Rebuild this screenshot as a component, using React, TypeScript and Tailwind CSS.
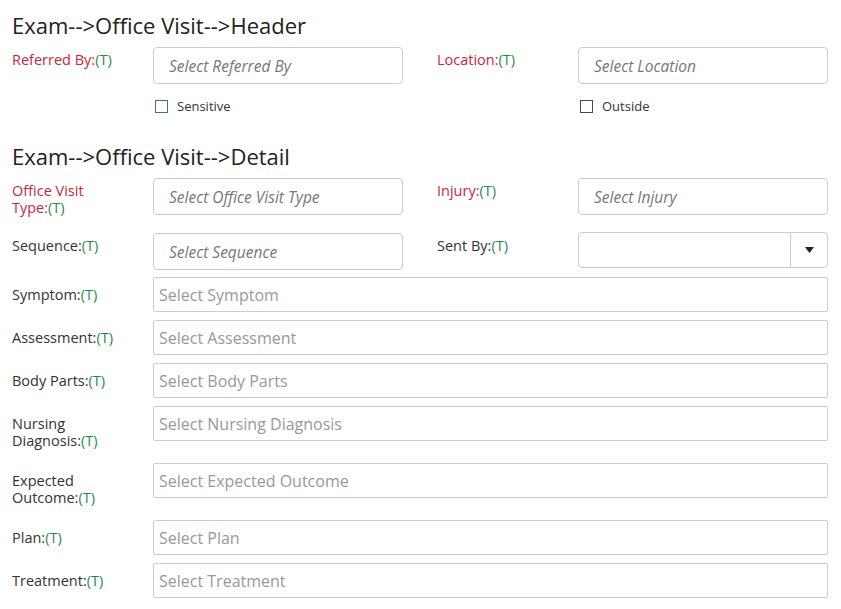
import React from "react";

const RED = "text-[#c7283c]";
const GREEN = "text-[#1f8a4c]";

function Label({
  text,
  required,
  top,
}: {
  text: string;
  required?: boolean;
  top?: boolean;
}) {
  const lines = text.split("\n");
  return (
    <div className="w-[141px] shrink-0">
      <div
        className={`whitespace-nowrap text-[14.5px] leading-[17px] ${
          top ? "pt-[4px] pb-[10px]" : "pt-[9px] pb-[6px]"
        } ${required ? RED : "text-[#333]"}`}
      >
        {lines.map((line, i) => (
          <div key={i}>
            {line}
            {i === lines.length - 1 && <span className={GREEN}>(T)</span>}
          </div>
        ))}
      </div>
    </div>
  );
}

function SmallInput({ placeholder }: { placeholder: string }) {
  return (
    <input
      placeholder={placeholder}
      className="w-[250px] h-[37px] shrink-0 rounded-[4px] border border-[#ccc] px-[15px] text-[15.5px] italic text-[#555] placeholder:text-[#777] bg-white outline-none"
    />
  );
}

function WideInput({ placeholder }: { placeholder: string }) {
  return (
    <input
      placeholder={placeholder}
      className="flex-1 h-[35px] rounded-[2px] border border-[#ccc] px-[5px] text-[16px] text-[#555] placeholder:text-[#999] bg-white outline-none"
    />
  );
}

function Checkbox({ label, color }: { label: string; color: string }) {
  return (
    <label className="flex items-center gap-[9px] text-[13px] leading-[13px] text-[#333] pl-[2px]">
      <span className={`w-[13px] h-[13px] border ${color} bg-white`} />
      {label}
    </label>
  );
}

function SentBy() {
  return (
    <div className="w-[250px] h-[36px] shrink-0 rounded-[4px] border border-[#ccc] flex bg-white">
      <div className="flex-1" />
      <div className="w-[37px] border-l border-[#ccc] flex items-center justify-center">
        <svg width="9" height="6" viewBox="0 0 9 6">
          <path d="M0 0h9L4.5 6z" fill="#222" />
        </svg>
      </div>
    </div>
  );
}

const wideRows: [string, string][] = [
  ["Symptom:", "Select Symptom"],
  ["Assessment:", "Select Assessment"],
  ["Body Parts:", "Select Body Parts"],
  ["Nursing\nDiagnosis:", "Select Nursing Diagnosis"],
  ["Expected\nOutcome:", "Select Expected Outcome"],
  ["Plan:", "Select Plan"],
  ["Treatment:", "Select Treatment"],
];

export default function App() {
  return (
    <div
      className="w-[841px] min-h-[609px] bg-white pl-[12px] pr-[13px]"
      style={{ fontFamily: '"Open Sans", "Segoe UI", sans-serif' }}
    >
      <h2 className="pt-[10px] text-[22px] leading-[30px] text-[#222] mb-[7px]">
        Exam--&gt;Office Visit--&gt;Header
      </h2>

      <div className="flex">
        <Label text="Referred By:" required top />
        <SmallInput placeholder="Select Referred By" />
        <div className="w-[34px] shrink-0" />
        <Label text="Location:" required top />
        <SmallInput placeholder="Select Location" />
      </div>
      <div className="flex mt-[16px]">
        <div className="w-[141px] shrink-0" />
        <div className="w-[250px] shrink-0">
          <Checkbox label="Sensitive" color="border-[#3c6fa8]" />
        </div>
        <div className="w-[34px] shrink-0" />
        <div className="w-[141px] shrink-0" />
        <Checkbox label="Outside" color="border-[#4a4a4a]" />
      </div>

      <h2 className="mt-[28px] text-[22px] leading-[30px] text-[#222] mb-[7px]">
        Exam--&gt;Office Visit--&gt;Detail
      </h2>

      <div className="flex mb-[7px]">
        <Label text={"Office Visit\nType:"} required top />
        <SmallInput placeholder="Select Office Visit Type" />
        <div className="w-[34px] shrink-0" />
        <Label text="Injury:" required top />
        <SmallInput placeholder="Select Injury" />
      </div>
      <div className="flex items-start mb-[7px]">
        <Label text="Sequence:" top />
        <SmallInput placeholder="Select Sequence" />
        <div className="w-[34px] shrink-0" />
        <Label text="Sent By:" top />
        <div className="-mt-[1px]">
          <SentBy />
        </div>
      </div>

      {wideRows.map(([label, ph]) => (
        <div key={label} className="flex items-start mb-[8px]">
          <Label text={label} />
          <WideInput placeholder={ph} />
        </div>
      ))}
    </div>
  );
}
